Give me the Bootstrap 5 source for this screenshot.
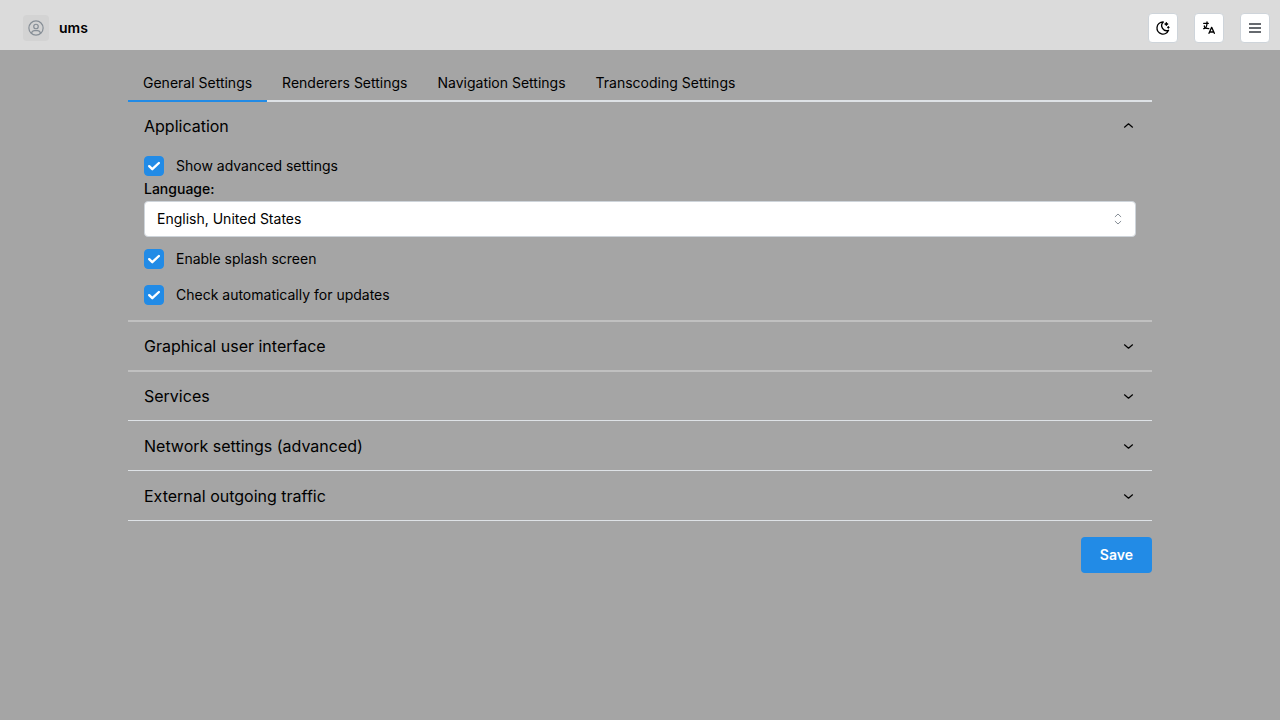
<!DOCTYPE html>
<html lang="en">
<head>
<meta charset="utf-8">
<meta name="viewport" content="width=device-width, initial-scale=1">
<title>ums – Settings</title>
<link href="https://cdn.jsdelivr.net/npm/bootstrap@5.3.0/dist/css/bootstrap.min.css" rel="stylesheet">
<style>
  body { font-family: Inter, "Liberation Sans", sans-serif; font-size: 14px; line-height: 20px; color: #000; background: #a5a5a5; }
  .topbar { height: 50px; padding: 6px 10px 0 23px; background: #dbdbdb; }
  .avatar { width: 26px; height: 26px; border-radius: 4px; background: #d3d3d3; color: #868e96; }
  .brand { gap: 10px; }
  .brand-link { color: #000; font-weight: 600; text-decoration: none; }
  .tool-btn { width: 30px; height: 30px; padding: 0; border: 1px solid #ced4da; border-radius: 4px; background: #fff; color: #000; }
  .tool-btn:hover { background: #f1f3f5; }
  .settings { width: 80%; padding-top: 16px; }
  .settings .nav-tabs { border-bottom: 2px solid #dee2e6; --bs-nav-tabs-border-width: 2px; }
  .settings .nav-link { padding: 7px 15px; border: 0; border-bottom: 2px solid transparent; border-radius: 0; margin-bottom: -2px; color: #000; background: none; }
  .settings .nav-link.active { border-color: #228be6; color: #000; background: none; }
  .settings .accordion-item { border: 0; border-bottom: 1px solid #dee2e6; border-radius: 0; color: #000; background: none; }
  .settings .accordion-item.soft-line { border-bottom: 2px solid #c0c0c0; }
  .settings .accordion-button { height: 49px; padding: 0 16px; font-size: 16px; line-height: 24px; color: #000; background: none; box-shadow: none; }
  .settings .soft-line .accordion-button, .settings .soft-line + .accordion-item .accordion-button { height: 48px; }
  .settings .accordion-button::after { display: none; }
  .chevron { width: 16px; height: 16px; margin-left: auto; }
  .accordion-button:not(.collapsed) .chevron { transform: rotateX(180deg); }
  .settings .accordion-body { padding: 6px 16px 15px; }
  .settings .form-check { display: flex; align-items: center; gap: 12px; min-height: 20px; padding: 0; margin: 0; }
  .settings .form-check-input { flex: none; float: none; width: 20px; height: 20px; margin: 0; border-radius: 4px; }
  .settings .form-check-input:checked { border-color: #228be6; background-color: #228be6; background-size: 20px;
    background-image: url("data:image/svg+xml,%3Csvg xmlns='http://www.w3.org/2000/svg' viewBox='0 0 20 20'%3E%3Cpath fill='none' stroke='%23fff' stroke-width='2.4' stroke-linecap='round' stroke-linejoin='round' d='M5.2 10.2l3.1 3L14.9 7'/%3E%3C/svg%3E"); }
  .settings .form-label { display: block; margin: 3px 0 2px; font-weight: 500; }
  .settings .form-select { height: 36px; padding: 0 36px 1px 12px; margin-bottom: 12px; font-size: 14px; color: #000; border: 1px solid #ced4da; border-radius: 4px; background-color: #fff; background-position: right 9px center; background-size: 16px;
    background-image: url("data:image/svg+xml,%3Csvg xmlns='http://www.w3.org/2000/svg' viewBox='0 0 16 16'%3E%3Cpath fill='none' stroke='%23868e96' stroke-linecap='round' stroke-linejoin='round' d='M5.2 5.7L8 3l2.800 2.700M5.2 10.300L8 13l2.800-2.700'/%3E%3C/svg%3E"); }
  .save-btn { height: 36px; padding: 0 18px; border: 1px solid transparent; border-radius: 4px; font-size: 14px; line-height: 20px; font-weight: 600; color: #fff; background: #228be6; }
  .save-btn:hover { color: #fff; background: #1c7ed6; }
</style>
</head>
<body>
<header class="topbar d-flex align-items-center justify-content-between">
  <div class="brand d-flex align-items-center">
    <span class="avatar d-flex align-items-center justify-content-center">
      <svg width="18" height="18" viewBox="0 0 24 24" fill="none" stroke="currentColor" stroke-width="1.6" stroke-linecap="round" stroke-linejoin="round" aria-hidden="true"><circle cx="12" cy="12" r="9.5"/><circle cx="12" cy="10" r="3"/><path d="M6 18.9c.6-2.3 2-3.400 4-3.400h4c2 0 3.400 1.100 4 3.400"/></svg>
    </span>
    <a class="brand-link" href="#">ums</a>
  </div>
  <div class="d-flex gap-3">
    <button type="button" class="btn tool-btn d-flex align-items-center justify-content-center" aria-label="Toggle color scheme">
      <svg width="16" height="16" viewBox="0 0 24 24" fill="none" stroke="currentColor" stroke-width="2" stroke-linecap="round" stroke-linejoin="round"><path d="M12 3h.4a7.500 7.500 0 0 0 7.900 12.400A9 9 0 1 1 12 3z"/><path d="M17 4a2 2 0 0 0 2 2 2 2 0 0 0-2 2 2 2 0 0 0-2-2 2 2 0 0 0 2-2M19 11h2M20 10v2"/></svg>
    </button>
    <button type="button" class="btn tool-btn d-flex align-items-center justify-content-center" aria-label="Language">
      <svg width="16" height="16" viewBox="0 0 24 24" fill="none" stroke="currentColor" stroke-width="2" stroke-linecap="round" stroke-linejoin="round"><path d="M4 5h7M9 3v2c0 4.400-2.200 8-5 8M5 9c0 2.100 3 3.900 6.700 4M12 20l4-9 4 9M19.100 18h-6.200"/></svg>
    </button>
    <button type="button" class="btn tool-btn d-flex align-items-center justify-content-center" aria-label="Menu">
      <svg width="16" height="16" viewBox="0 0 16 16" fill="none" stroke="#343a40" stroke-width="1.400"><path d="M2 4h12M2 8h12M2 12h12"/></svg>
    </button>
  </div>
</header>

<main class="settings mx-auto">
  <ul class="nav nav-tabs" role="tablist">
    <li class="nav-item"><button type="button" class="nav-link active" role="tab" aria-selected="true">General Settings</button></li>
    <li class="nav-item"><button type="button" class="nav-link" role="tab">Renderers Settings</button></li>
    <li class="nav-item"><button type="button" class="nav-link" role="tab">Navigation Settings</button></li>
    <li class="nav-item"><button type="button" class="nav-link" role="tab">Transcoding Settings</button></li>
  </ul>

  <form>
    <div class="accordion" id="sections">
      <div class="accordion-item soft-line">
        <button class="accordion-button" type="button" data-bs-toggle="collapse" data-bs-target="#application" aria-expanded="true">Application
          <svg class="chevron" viewBox="0 0 16 16" fill="none" stroke="currentColor" stroke-width="1.200" stroke-linecap="round" stroke-linejoin="round"><path d="M4.500 6.800l4 3.400 4-3.400"/></svg></button>
        <div id="application" class="accordion-collapse collapse show">
          <div class="accordion-body">
            <div class="form-check">
              <input class="form-check-input" type="checkbox" id="advanced" checked>
              <label class="form-check-label" for="advanced">Show advanced settings</label>
            </div>
            <label class="form-label" for="language">Language:</label>
            <select class="form-select" id="language"><option>English, United States</option></select>
            <div class="form-check mb-3">
              <input class="form-check-input" type="checkbox" id="splash" checked>
              <label class="form-check-label" for="splash">Enable splash screen</label>
            </div>
            <div class="form-check">
              <input class="form-check-input" type="checkbox" id="updates" checked>
              <label class="form-check-label" for="updates">Check automatically for updates</label>
            </div>
          </div>
        </div>
      </div>
      <div class="accordion-item soft-line">
        <button class="accordion-button collapsed" type="button">Graphical user interface
          <svg class="chevron" viewBox="0 0 16 16" fill="none" stroke="currentColor" stroke-width="1.200" stroke-linecap="round" stroke-linejoin="round"><path d="M4.500 6.800l4 3.400 4-3.400"/></svg></button>
      </div>
      <div class="accordion-item">
        <button class="accordion-button collapsed" type="button">Services
          <svg class="chevron" viewBox="0 0 16 16" fill="none" stroke="currentColor" stroke-width="1.200" stroke-linecap="round" stroke-linejoin="round"><path d="M4.500 6.800l4 3.400 4-3.400"/></svg></button>
      </div>
      <div class="accordion-item">
        <button class="accordion-button collapsed" type="button">Network settings (advanced)
          <svg class="chevron" viewBox="0 0 16 16" fill="none" stroke="currentColor" stroke-width="1.200" stroke-linecap="round" stroke-linejoin="round"><path d="M4.500 6.800l4 3.400 4-3.400"/></svg></button>
      </div>
      <div class="accordion-item">
        <button class="accordion-button collapsed" type="button">External outgoing traffic
          <svg class="chevron" viewBox="0 0 16 16" fill="none" stroke="currentColor" stroke-width="1.200" stroke-linecap="round" stroke-linejoin="round"><path d="M4.500 6.800l4 3.400 4-3.400"/></svg></button>
      </div>
    </div>
    <div class="d-flex justify-content-end mt-3">
      <button type="button" class="btn save-btn">Save</button>
    </div>
  </form>
</main>
<script src="https://cdn.jsdelivr.net/npm/bootstrap@5.3.0/dist/js/bootstrap.bundle.min.js"></script>
</body>
</html>
